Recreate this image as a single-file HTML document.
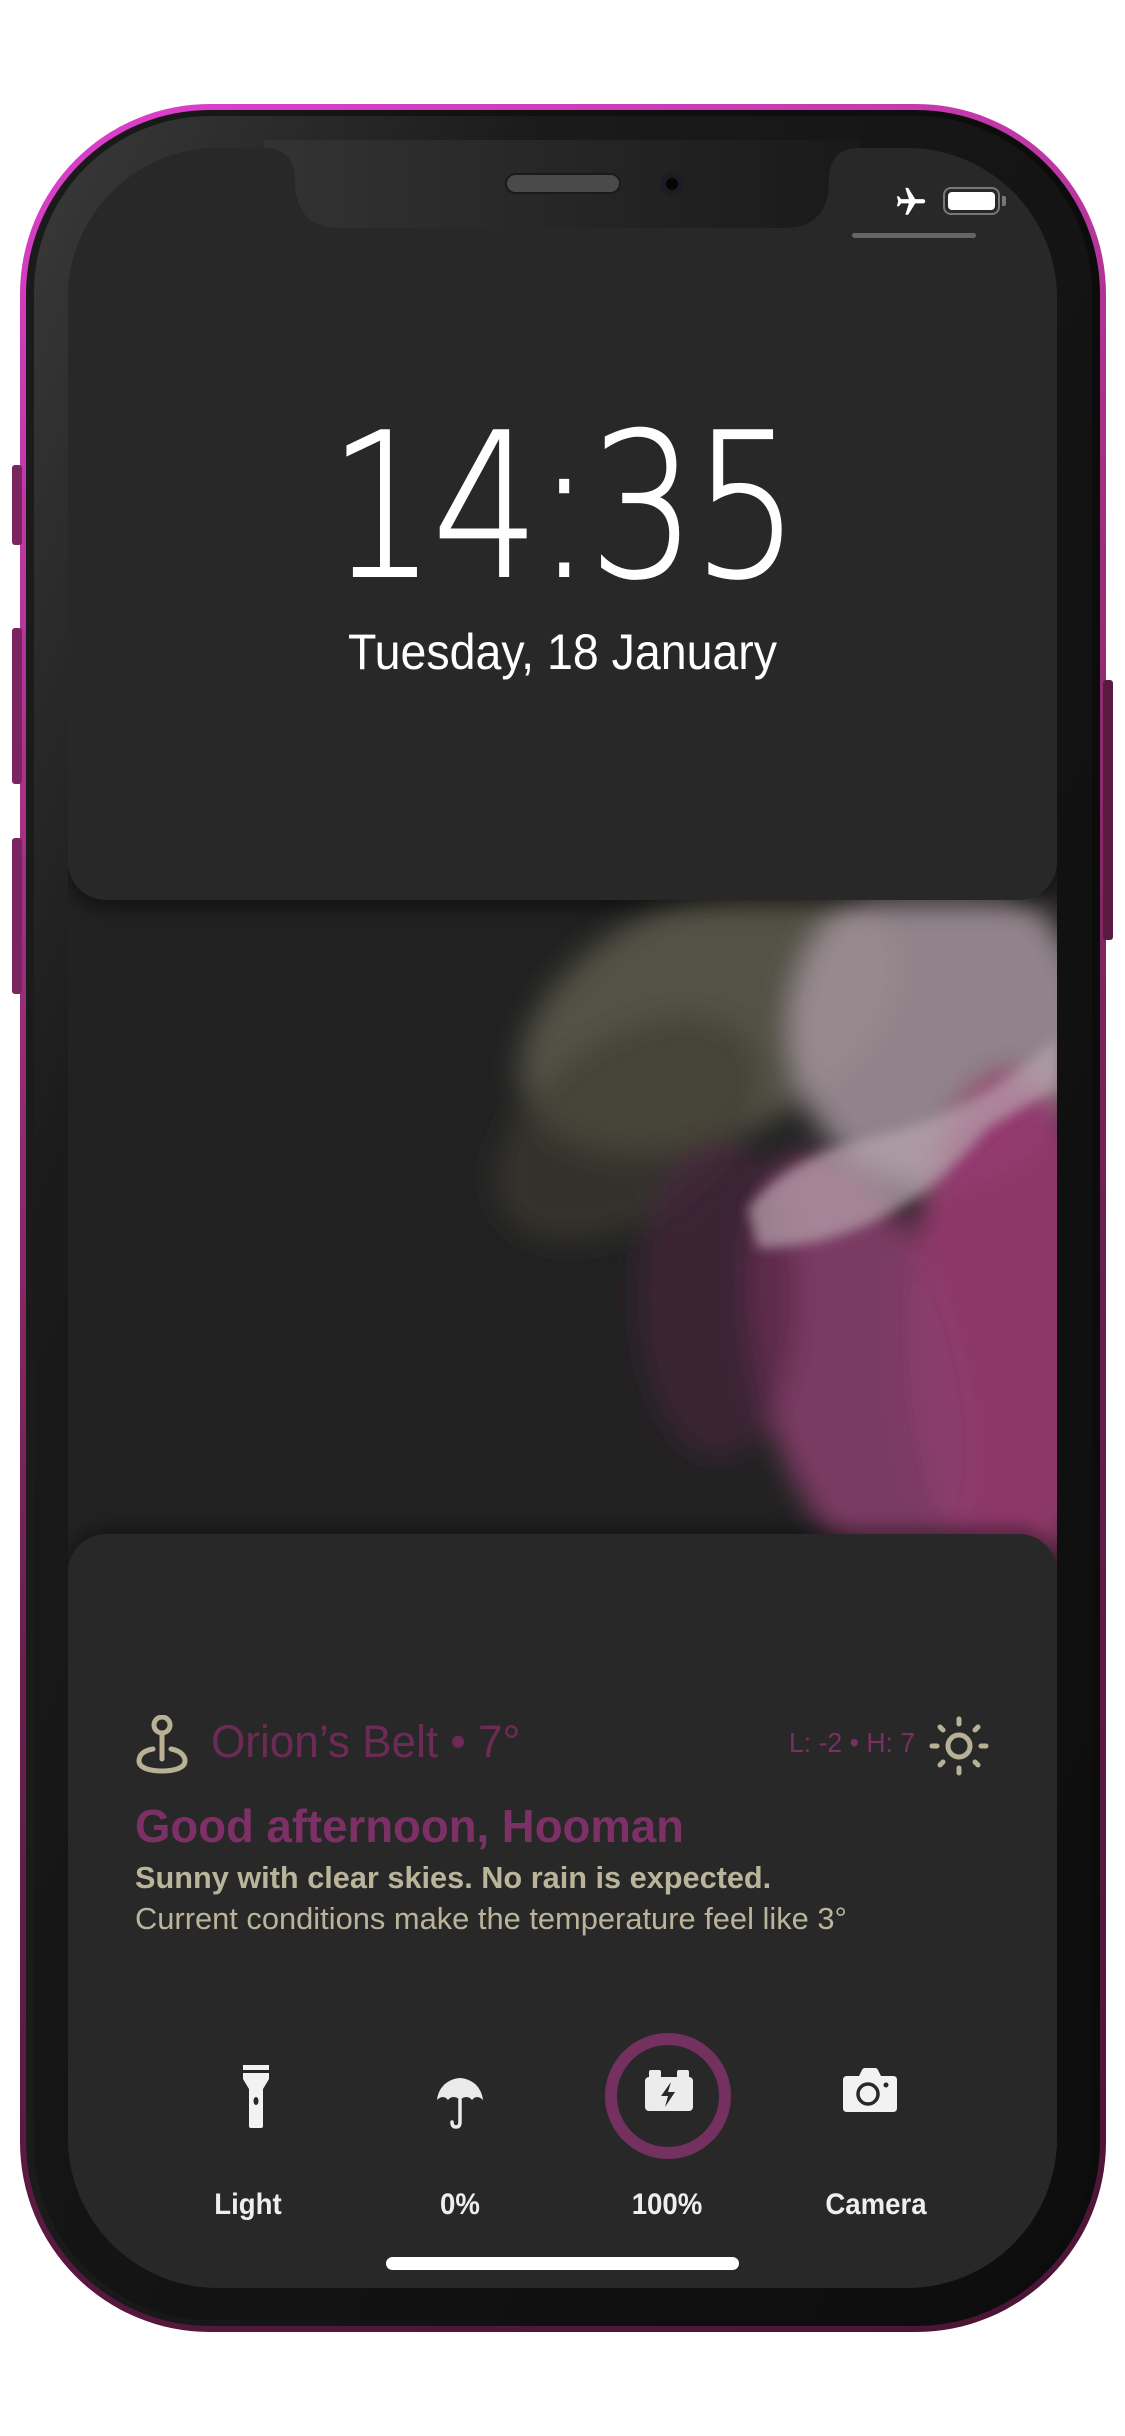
<!DOCTYPE html>
<html><head><meta charset="utf-8"><style>
*{margin:0;padding:0;box-sizing:border-box}
body{width:1125px;height:2436px;background:#fff;position:relative;overflow:hidden;font-family:"Liberation Sans",sans-serif}
.abs{position:absolute}
.frame{left:20px;top:104px;width:1086px;height:2228px;border-radius:190px;background:linear-gradient(160deg,#e040d0 0%,#a0307f 30%,#6a1f4d 60%,#4a1434 100%);}
.rim{left:26px;top:110px;width:1074px;height:2216px;border-radius:184px;background:linear-gradient(90deg,#1b1b1b,#101010 50%,#0c0c0c)}
.bezel-hl{left:34px;top:116px;width:1058px;height:2204px;border-radius:176px;background:linear-gradient(115deg,#3a3a3a 0%,#1a1a1a 25%,#121212 60%,#0d0d0d)}
.screen{left:68px;top:148px;width:989px;height:2140px;border-radius:150px;background:#222;overflow:hidden}
.card1{left:0;top:0;width:989px;height:752px;background:#282828;border-radius:0 0 38px 38px;box-shadow:0 8px 20px rgba(0,0,0,.5)}
.card2{left:0;top:1386px;width:989px;height:760px;background:#282828;border-radius:38px 38px 0 0;box-shadow:0 -6px 18px rgba(0,0,0,.4)}
.btn{background:#7a2460;border-radius:3px}
.lbl{color:#eee;font-size:30px;font-weight:bold;line-height:1;text-align:center;transform:scaleX(0.92)}
</style></head><body>
<div class="abs frame"></div>
<div class="abs btn" style="left:12px;top:465px;width:10px;height:80px"></div>
<div class="abs btn" style="left:12px;top:628px;width:10px;height:156px"></div>
<div class="abs btn" style="left:12px;top:838px;width:10px;height:156px"></div>
<div class="abs btn" style="left:1103px;top:680px;width:10px;height:260px;background:#5a1a42"></div>
<div class="abs rim"></div>
<div class="abs bezel-hl"></div>
<div class="abs screen">
  <svg class="abs" style="left:0;top:720px" width="989" height="700" viewBox="0 0 989 700">
    <defs>
      <filter id="b" x="-50%" y="-50%" width="200%" height="200%"><feGaussianBlur stdDeviation="14"/></filter>
      <filter id="b2" x="-50%" y="-50%" width="200%" height="200%"><feGaussianBlur stdDeviation="6"/></filter>
    </defs>
    <g filter="url(#b)">
      <ellipse cx="640" cy="150" rx="200" ry="120" fill="#6a6754" transform="rotate(-25 640 150)" opacity=".7"/>
      <ellipse cx="560" cy="260" rx="150" ry="90" fill="#3f3c32" transform="rotate(-35 560 260)" opacity=".6"/>
      <ellipse cx="870" cy="160" rx="150" ry="160" fill="#a3959c" opacity=".85"/>
      <ellipse cx="940" cy="460" rx="100" ry="260" fill="#94386e" opacity=".95"/>
      <ellipse cx="790" cy="500" rx="100" ry="220" fill="#8a3f6e" transform="rotate(-15 790 500)" opacity=".85"/>
      <ellipse cx="650" cy="430" rx="80" ry="160" fill="#4d2540" opacity=".6"/>
    </g>
    <g filter="url(#b2)">
      <path d="M690 380 Q820 380 920 260 L989 220 L989 170 Q900 250 800 270 Q720 290 680 340Z" fill="#b8a4ae" opacity=".7"/>
    </g>
  </svg>
  <div class="abs card1">
    <div class="abs" style="left:0;top:260px;width:989px;text-align:center;color:#fff;font-family:'DejaVu Sans',sans-serif;font-weight:200;font-size:200px;line-height:1;transform:scaleX(0.84);transform-origin:center;-webkit-text-stroke:2px #fff;letter-spacing:-4px">14:35</div>
    <div class="abs" style="left:0;top:479px;width:989px;text-align:center;color:#fff;font-size:50px;line-height:1;transform:scaleX(0.93)">Tuesday, 18 January</div>
  </div>
  <div class="abs card2">
    <svg class="abs" style="left:68px;top:181px" width="52" height="60" viewBox="0 0 52 60"><circle cx="26" cy="10" r="8" fill="none" stroke="#b8b196" stroke-width="5"/><line x1="26" y1="18" x2="26" y2="44" stroke="#b8b196" stroke-width="5" stroke-linecap="round"/><path d="M17 34 C5 36 3 42 3 46 C3 53 14 56 26 56 C38 56 49 53 49 46 C49 42 46 36 35 34" fill="none" stroke="#b8b196" stroke-width="5" stroke-linecap="round"/></svg>
    <div class="abs" style="left:143px;top:185px;color:#6e2a56;font-size:45px;line-height:1;white-space:nowrap;transform:scaleX(0.98);transform-origin:left">Orion’s Belt • 7°</div>
    <div class="abs" style="left:721px;top:195px;color:#7a2f62;font-size:28px;line-height:1;white-space:nowrap;transform:scaleX(0.95);transform-origin:left">L: -2 • H: 7</div>
    <svg class="abs" style="left:861px;top:182px" width="60" height="60" viewBox="0 0 60 60"><circle cx="30" cy="30" r="11" fill="none" stroke="#b8b196" stroke-width="5"/><g stroke="#b8b196" stroke-width="5" stroke-linecap="round"><line x1="30" y1="3" x2="30" y2="8"/><line x1="30" y1="52" x2="30" y2="57"/><line x1="3" y1="30" x2="8" y2="30"/><line x1="52" y1="30" x2="57" y2="30"/><line x1="11" y1="11" x2="14" y2="14"/><line x1="46" y1="46" x2="49" y2="49"/><line x1="11" y1="49" x2="14" y2="46"/><line x1="46" y1="14" x2="49" y2="11"/></g></svg>
    <div class="abs" style="left:67px;top:269px;color:#7d3065;font-size:46px;font-weight:bold;line-height:1;white-space:nowrap;transform:scaleX(0.99);transform-origin:left">Good afternoon, Hooman</div>
    <div class="abs" style="left:67px;top:328px;color:#b9b49a;font-size:31px;font-weight:bold;line-height:1;white-space:nowrap;transform:scaleX(0.99);transform-origin:left">Sunny with clear skies. No rain is expected.</div>
    <div class="abs" style="left:67px;top:369px;color:#b9b49a;font-size:31px;line-height:1;white-space:nowrap;transform:scaleX(0.995);transform-origin:left">Current conditions make the temperature feel like 3°</div>
    <svg class="abs" style="left:172px;top:531px" width="32" height="64" viewBox="0 0 32 64"><rect x="3" y="0" width="26" height="5" fill="#f2f2f2"/><path d="M3 8 H29 V14 L23 24 V61 Q23 63 21 63 H11 Q9 63 9 61 V24 L3 14Z" fill="#f2f2f2"/><ellipse cx="16" cy="36" rx="2.5" ry="4" fill="#282828"/></svg>
    <svg class="abs" style="left:368px;top:540px" width="48" height="56" viewBox="0 0 48 56"><path d="M24 0 V4 C10 5 2 15 1 26 C5 22 9 22 12 26 C15 22 20 22 24 26 C28 22 33 22 36 26 C39 22 43 22 47 26 C46 15 38 5 24 4Z" fill="#eaeaea"/><path d="M24 26 V48 Q24 53 20 53 Q16 53 16 48" fill="none" stroke="#eaeaea" stroke-width="3.5" stroke-linecap="round"/></svg>
    <svg class="abs" style="left:535px;top:497px" width="130" height="130" viewBox="0 0 130 130"><circle cx="65" cy="65" r="57" fill="none" stroke="#74305f" stroke-width="12"/><rect x="42" y="46" width="48" height="34" rx="4" fill="#ececec"/><rect x="46" y="39" width="12" height="9" rx="2" fill="#ececec"/><rect x="74" y="39" width="12" height="9" rx="2" fill="#ececec"/><path d="M68 51 L58 65 H65 L62 76 L72 61 H65Z" fill="#282828"/></svg>
    <svg class="abs" style="left:775px;top:534px" width="54" height="44" viewBox="0 0 54 44"><path d="M4 8 H16 L19 2 Q20 0 22 0 H32 Q34 0 35 2 L38 8 H50 Q54 8 54 12 V40 Q54 44 50 44 H4 Q0 44 0 40 V12 Q0 8 4 8Z" fill="#f2f2f2"/><circle cx="25" cy="26" r="10" fill="none" stroke="#282828" stroke-width="3.5"/><circle cx="43" cy="17" r="2.5" fill="#282828"/></svg>
    <div class="abs lbl" style="left:120px;top:656px;width:120px">Light</div>
    <div class="abs lbl" style="left:332px;top:656px;width:120px">0%</div>
    <div class="abs lbl" style="left:529px;top:656px;width:140px">100%</div>
    <div class="abs lbl" style="left:738px;top:656px;width:140px">Camera</div>
    <div class="abs" style="left:318px;top:723px;width:353px;height:13px;border-radius:7px;background:#fff"></div>
  </div>
</div>
<svg class="abs" style="left:264px;top:140px" width="596" height="90" viewBox="0 0 596 90">
  <defs><linearGradient id="ng" x1="0" x2="1"><stop offset="0" stop-color="#333"/><stop offset="1" stop-color="#191919"/></linearGradient></defs>
  <path d="M0 0 H596 V8 Q565 8 565 40 Q565 88 520 88 H76 Q31 88 31 40 Q31 8 0 8Z" fill="url(#ng)"/>
  <rect x="242" y="34" width="114" height="19" rx="9.5" fill="#4a4a4a" stroke="#1a1a1a" stroke-width="2"/>
  <circle cx="408" cy="44" r="12" fill="#1c1c26"/><circle cx="408" cy="44" r="6" fill="#050505"/>
</svg>
<svg class="abs" style="left:891px;top:185px" width="40" height="34" viewBox="0 0 24 24"><path d="M21 16v-2l-8-5V3.5c0-.83-.67-1.5-1.5-1.5S10 2.670 10 3.5V9l-8 5v2l8-2.5V19l-2 1.5V22l3.5-1 3.5 1v-1.5L13 19v-5.5l8 2.5z" fill="#fff" transform="rotate(90 12 12)"/></svg>
<div class="abs" style="left:943px;top:187px;width:57px;height:28px;border:2px solid #777;border-radius:8px;padding:3px"><div style="width:100%;height:100%;background:#fff;border-radius:4px"></div></div>
<div class="abs" style="left:1002px;top:196px;width:4px;height:10px;background:#777;border-radius:0 2px 2px 0"></div>
<div class="abs" style="left:852px;top:233px;width:124px;height:5px;background:#666;border-radius:3px"></div>
</body></html>
